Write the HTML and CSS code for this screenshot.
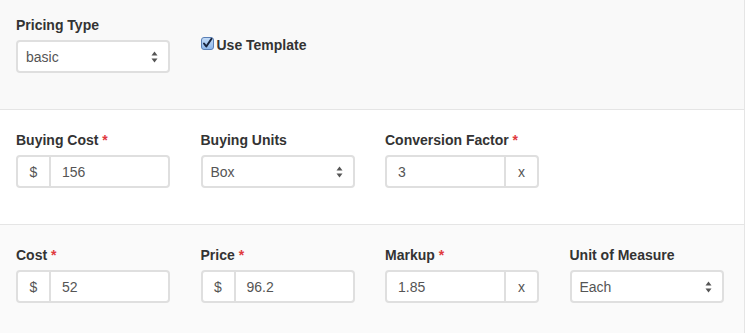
FILE: index.html
```html
<!DOCTYPE html>
<html>
<head>
<meta charset="utf-8">
<link rel="stylesheet" href="styles.css">
</head>
<body>
<div class="panel">
  <section class="sec sec-first">
    <div class="grid">
      <div class="field">
        <div class="label">Pricing Type</div>
        <div class="control select"><span class="val">basic</span><span class="arrows"><svg width="7" height="12" viewBox="0 0 7 12"><path d="M3.5 0.5 L6.5 4.5 L0.5 4.5 Z M0.5 7.5 L6.5 7.5 L3.5 11.5 Z" fill="#555"/></svg></span></div>
      </div>
      <div class="field check-field">
        <div class="check-row">
          <svg class="cb" width="13" height="13" viewBox="0 0 13 13"><defs><linearGradient id="g" x1="0" y1="0" x2="0" y2="1"><stop offset="0" stop-color="#c4dcf7"/><stop offset="1" stop-color="#8db6ea"/></linearGradient></defs><rect x="0.5" y="0.5" width="12" height="12" rx="2.5" fill="url(#g)" stroke="#5a7fb5"/><path d="M3 6.5 L5.3 9.5 L10.5 1.8" fill="none" stroke="#18253f" stroke-width="2" stroke-linecap="round" stroke-linejoin="round"/></svg>
          <span class="check-label">Use Template</span>
        </div>
      </div>
    </div>
  </section>
  <section class="sec sec-white">
    <div class="grid">
      <div class="field">
        <div class="label">Buying Cost <span class="req">*</span></div>
        <div class="control group"><span class="addon">$</span><span class="val in">156</span></div>
      </div>
      <div class="field">
        <div class="label">Buying Units</div>
        <div class="control select"><span class="val">Box</span><span class="arrows"><svg width="7" height="12" viewBox="0 0 7 12"><path d="M3.5 0.5 L6.5 4.5 L0.5 4.5 Z M0.5 7.5 L6.5 7.5 L3.5 11.5 Z" fill="#555"/></svg></span></div>
      </div>
      <div class="field">
        <div class="label">Conversion Factor <span class="req">*</span></div>
        <div class="control group"><span class="val in">3</span><span class="addon addon-r">x</span></div>
      </div>
    </div>
  </section>
  <section class="sec sec-last">
    <div class="grid">
      <div class="field">
        <div class="label">Cost <span class="req">*</span></div>
        <div class="control group"><span class="addon">$</span><span class="val in">52</span></div>
      </div>
      <div class="field">
        <div class="label">Price <span class="req">*</span></div>
        <div class="control group"><span class="addon">$</span><span class="val in">96.2</span></div>
      </div>
      <div class="field">
        <div class="label">Markup <span class="req">*</span></div>
        <div class="control group"><span class="val in">1.85</span><span class="addon addon-r">x</span></div>
      </div>
      <div class="field">
        <div class="label">Unit of Measure</div>
        <div class="control select"><span class="val">Each</span><span class="arrows"><svg width="7" height="12" viewBox="0 0 7 12"><path d="M3.5 0.5 L6.5 4.5 L0.5 4.5 Z M0.5 7.5 L6.5 7.5 L3.5 11.5 Z" fill="#555"/></svg></span></div>
      </div>
    </div>
  </section>
</div>
</body>
</html>
```

FILE: styles.css
```css
* { box-sizing: border-box; }
html, body { margin: 0; padding: 0; }
body {
  font-family: "Liberation Sans", Arial, sans-serif;
  font-size: 14px;
  color: #333;
  background: #fafafa;
  width: 745px;
  height: 333px;
  overflow: hidden;
}
.panel {
  border-right: 1px solid #e5e5e5;
  height: 333px;
}
.sec {
  padding: 20px 16px 36px;
  border-bottom: 1px solid #e5e5e5;
}
.sec-first {
  background: #f9f9f9;
  padding-top: 15px;
}
.sec-white { background: #fff; }
.sec-last {
  background: #fafafa;
  border-bottom: none;
}
.grid {
  display: grid;
  grid-template-columns: repeat(4, 154px);
  column-gap: 30.5px;
}
.label {
  font-weight: bold;
  line-height: 20px;
  margin-bottom: 5px;
  white-space: nowrap;
}
.req { color: #e0393e; }
.control {
  height: 33px;
  border: 2px solid #dfdfdf;
  border-radius: 4px;
  background: #fff;
  display: flex;
  align-items: center;
  color: #555;
  font-size: 14px;
}
.select { padding: 0 10px 0 8px; justify-content: space-between; }
.arrows { display: flex; align-items: center; }
.arrows svg { display: block; }
.group .addon {
  width: 33px;
  height: 100%;
  display: flex;
  align-items: center;
  justify-content: center;
  border-right: 2px solid #dfdfdf;
  flex: none;
}
.group .addon-r {
  border-right: none;
  border-left: 2px solid #dfdfdf;
}
.group .in { flex: 1; padding-left: 11px; }
.check-field { padding-top: 20px; }
.check-row {
  display: flex;
  align-items: center;
  height: 20px;
}
.cb { display: block; margin-right: 3px; margin-top: -3px; }
.check-label { font-weight: bold; line-height: 20px; }
```
